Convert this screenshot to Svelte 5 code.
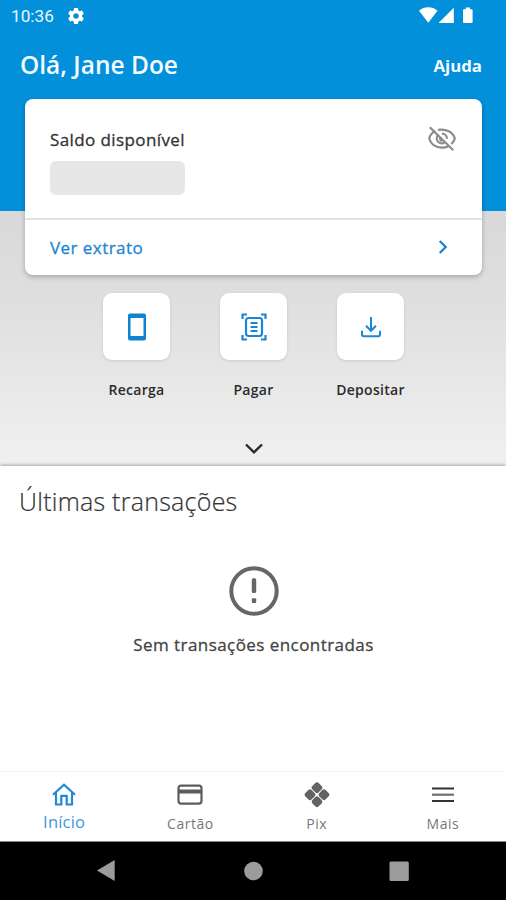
<script lang="ts">
	const userName = "Jane Doe";
	const time = "10:36";

	let active = "inicio";

	const actions = [
		{ id: "recarga", label: "Recarga" },
		{ id: "pagar", label: "Pagar" },
		{ id: "depositar", label: "Depositar" },
	];

	const tabs = [
		{ id: "inicio", label: "Início" },
		{ id: "cartao", label: "Cartão" },
		{ id: "pix", label: "Pix" },
		{ id: "mais", label: "Mais" },
	];
</script>

<div class="screen">
	<section class="top">
		<div class="status">
			<span class="time">{time}</span>
			<svg class="gear" viewBox="2 2 20 20" width="16" height="16">
				<path fill="#fff" d="M19.43 12.98c.04-.32.07-.64.07-.98s-.03-.66-.07-.98l2.11-1.65c.19-.15.24-.42.12-.64l-2-3.46c-.12-.22-.39-.3-.61-.22l-2.49 1c-.52-.4-1.08-.73-1.69-.98l-.38-2.65C14.46 2.18 14.25 2 14 2h-4c-.25 0-.46.18-.49.42l-.38 2.65c-.61.25-1.17.59-1.69.98l-2.49-1c-.23-.09-.49 0-.61.22l-2 3.46c-.13.22-.07.49.12.64l2.11 1.65c-.04.32-.07.65-.07.98s.03.66.07.98l-2.11 1.65c-.19.15-.24.42-.12.64l2 3.46c.12.22.39.3.61.22l2.49-1c.52.4 1.08.73 1.69.98l.38 2.65c.03.24.24.42.49.42h4c.25 0 .46-.18.49-.42l.38-2.65c.61-.25 1.17-.59 1.69-.98l2.49 1c.23.09.49 0 .61-.22l2-3.46c.12-.22.07-.49-.12-.64l-2.11-1.65zM12 15.5c-1.93 0-3.5-1.57-3.5-3.5s1.57-3.5 3.5-3.5 3.5 1.57 3.5 3.5-1.57 3.5-3.5 3.5z" />
			</svg>
			<svg class="signals" viewBox="0 0 55 17" width="55" height="17">
				<path fill="#fff" d="M0 3.7C5 -.8 13.5 -.8 18.5 3.7L9.3 15.8zM34.800 .8V16H19.500zM44 3.200q0-1 1-1h1.700V.5h4.200v1.700h1.700q1 0 1 1v11.800q0 1-1 1h-7.600q-1 0-1-1z" />
			</svg>
		</div>

		<header class="header">
			<h1>Olá, {userName}</h1>
			<button class="help">Ajuda</button>
		</header>

		<div class="card">
			<div class="balance">
				<div>
					<p class="balance-label">Saldo disponível</p>
					<div class="balance-hidden"></div>
				</div>
				<svg class="eye" viewBox="0 0 30 26" width="30" height="26" fill="none" stroke="#8c8c8c" stroke-width="2.200">
					<path d="M8.200 5C5 6.600 3 9 2.200 12.500C4 18.300 9 21.600 15 21.600C17.500 21.600 19.700 21.100 21.500 20.200M11 3.900C19.500 2.300 26 6.200 27.800 12.500C27.300 14.700 26 16.500 24.300 18" />
					<path d="M10.800 9.500C9.300 11.500 9.500 14.300 11.300 16C13 17.500 15.500 17.800 17.500 16.600M15 7.700C18 7.700 20 10 20 12.800M13.500 11.500C12.500 13 13.500 14.700 15.200 14.600" />
					<path d="M2.800 1.200L26.300 24.200" />
				</svg>
			</div>
			<button class="statement">
				<span>Ver extrato</span>
				<svg viewBox="0 0 10 14" width="10" height="14" fill="none" stroke="#1482d2" stroke-width="2.200">
					<path d="M1.700 1L7.700 7L1.700 13" />
				</svg>
			</button>
		</div>

		<div class="actions">
			{#each actions as action}
				<button class="action">
					<span class="tile">
						{#if action.id === "recarga"}
							<svg viewBox="0 0 18 28" width="18" height="28">
								<path fill="#0f82d2" fill-rule="evenodd" d="M2 .5h14q2 0 2 2v23q0 2-2 2H2q-2 0-2-2v-23q0-2 2-2zM2.500 5v18h13V5z" />
							</svg>
						{:else if action.id === "pagar"}
							<svg viewBox="0 0 26 28" width="26" height="28" fill="none" stroke="#1c86d6" stroke-width="2.200">
								<path d="M1.500 6V1.500H6M20 1.500h4.500V6M24.500 22v4.500H20M6 26.500H1.500V22" />
								<rect x="5" y="5" width="16" height="18" rx="2.500" />
								<path d="M9.500 10h7M9.500 14h7M9.500 18h7" />
							</svg>
						{:else}
							<svg viewBox="0 0 22 22" width="22" height="22" fill="none" stroke="#1c86d6" stroke-width="2">
								<path d="M11 1v13.500M6 9.800l5 5 5-5" />
								<path d="M2 14.800v3.700q0 1.700 1.700 1.700h14.600q1.700 0 1.700-1.700v-3.700" />
							</svg>
						{/if}
					</span>
					<span class="action-label">{action.label}</span>
				</button>
			{/each}
		</div>

		<svg class="expand" viewBox="0 0 18 12" width="18" height="12" fill="none" stroke="#2b2b2b" stroke-width="2.400">
			<path d="M1 1.500L9 9.300L17 1.500" />
		</svg>
	</section>

	<section class="transactions">
		<h2>Últimas transações</h2>
		<div class="empty">
			<svg viewBox="0 0 50 50" width="50" height="50">
				<circle cx="25" cy="25" r="22.700" fill="none" stroke="#666" stroke-width="4" />
				<rect x="22.800" y="12.300" width="4.400" height="14.700" rx="1.500" fill="#666" />
				<rect x="22.800" y="32.300" width="4.400" height="4.600" rx="1" fill="#666" />
			</svg>
			<p>Sem transações encontradas</p>
		</div>
	</section>

	<nav class="tabs">
		{#each tabs as tab}
			<button class="tab" class:active={active === tab.id} on:click={() => (active = tab.id)}>
				<svg viewBox="0 0 26 26" width="26" height="26" fill="none" stroke-width="2.200">
					{#if tab.id === "inicio"}
						<path stroke="#1e8ad6" stroke-width="2.200" d="M2 12.800L13 2.800L24 12.800M5 10.800V22.500H10.300V13.800H15.700V22.500H21V10.800" />
					{:else if tab.id === "cartao"}
						<rect x="1.500" y="3.600" width="23" height="18" rx="2.500" stroke="#5c5c5c" />
						<path stroke="#5c5c5c" stroke-width="4" d="M1.500 9.500h23" />
					{:else if tab.id === "pix"}
						<g fill="#636363" transform="translate(13 12.700) rotate(45)">
							<rect x="-9.400" y="-9.400" width="8.900" height="8.900" rx="2.400" />
							<rect x=".5" y="-9.400" width="8.900" height="8.900" rx="2.400" />
							<rect x="-9.400" y=".5" width="8.900" height="8.900" rx="2.400" />
							<rect x=".5" y=".5" width="8.900" height="8.900" rx="2.400" />
						</g>
					{:else}
						<path stroke="#333" d="M2 6.500h22M2 19h22" />
						<path stroke="#707070" d="M2 12.700h22" />
					{/if}
				</svg>
				<span>{tab.label}</span>
			</button>
		{/each}
	</nav>

	<div class="system">
		<svg viewBox="0 0 506 58" width="506" height="58" fill="#9b9b9b">
			<path d="M97 28.500L114.700 18V39z" />
			<circle cx="253.500" cy="29" r="9.300" />
			<rect x="389.500" y="19.500" width="19.300" height="19.500" rx="1.500" />
		</svg>
	</div>
</div>

<style>
	:global(body) {
		margin: 0;
		background: #fff;
	}
	.screen {
		display: flex;
		flex-direction: column;
		width: 506px;
		height: 900px;
		overflow: hidden;
		background: #fff;
		font-family: "Open Sans", "Noto Sans", sans-serif;
	}
	button {
		padding: 0;
		border: none;
		background: none;
		font-family: inherit;
		cursor: pointer;
	}
	h1,
	h2,
	p {
		margin: 0;
	}
	svg {
		display: block;
		flex: none;
	}
	.top {
		display: flex;
		flex-direction: column;
		flex: none;
		height: 466px;
		background: linear-gradient(#0390da 211px, #d9d9d9 211px, #dedede 290px, #f0f0f0 466px);
	}
	.status {
		display: flex;
		align-items: center;
		height: 32px;
		padding: 0 32px 0 11px;
	}
	.time {
		color: #e9f5fc;
		font-family: Roboto, sans-serif;
		font-size: 17.2px;
	}
	.gear {
		margin-left: 14px;
	}
	.signals {
		margin: -2px 0 0 auto;
	}
	.header {
		display: flex;
		align-items: center;
		justify-content: space-between;
		height: 67px;
		padding: 0 24px 2px 20px;
		box-sizing: border-box;
	}
	.header h1 {
		color: #f4faff;
		font-size: 24.5px;
		font-weight: 600;
	}
	.help {
		padding-top: 1px;
		color: #f4faff;
		font-size: 16.8px;
		font-weight: 700;
	}
	.card {
		width: 457px;
		height: 176px;
		margin-left: 25px;
		border-radius: 8px;
		background: #fff;
		box-shadow: 0 2px 5px rgba(0, 0, 0, 0.25);
	}
	.balance {
		display: flex;
		justify-content: space-between;
		height: 121px;
		padding: 28px 25px 0;
		box-sizing: border-box;
		border-bottom: 2px solid #e2e2e2;
	}
	.balance-label {
		color: #333;
		font-size: 17px;
		line-height: 26px;
		letter-spacing: 0.4px;
		-webkit-text-stroke: 0.3px #333;
	}
	.balance-hidden {
		width: 135px;
		height: 34px;
		margin-top: 8px;
		border-radius: 6px;
		background: #e7e7e7;
	}
	.eye {
		margin-top: -1px;
	}
	.statement {
		display: flex;
		align-items: center;
		justify-content: space-between;
		width: 100%;
		height: 54px;
		padding: 0 34px 0 25px;
		color: #1c86d6;
		font-size: 17px;
		letter-spacing: 0.45px;
		-webkit-text-stroke: 0.3px #1c86d6;
	}
	.actions {
		display: flex;
		justify-content: center;
		gap: 17px;
		margin-top: 18px;
		padding-left: 1px;
	}
	.action {
		display: flex;
		flex-direction: column;
		align-items: center;
		width: 100px;
	}
	.tile {
		display: flex;
		align-items: center;
		justify-content: center;
		width: 67px;
		height: 67px;
		border-radius: 9px;
		background: #fff;
		box-shadow: 0 1px 3px rgba(0, 0, 0, 0.12);
	}
	.action-label {
		margin-top: 20px;
		color: #2b2b2b;
		font-size: 14px;
		font-weight: 600;
		line-height: 20px;
		letter-spacing: 0.3px;
	}
	.expand {
		margin: 43px 0 0 244.5px;
	}
	.transactions {
		flex: 1;
		padding-top: 15px;
		box-shadow: 0 0 4px rgba(0, 0, 0, 0.5);
		clip-path: inset(-6px 0 0);
	}
	.transactions h2 {
		margin-left: 19px;
		color: #333;
		font-size: 25px;
		font-weight: 300;
		line-height: 40px;
		letter-spacing: 0.25px;
		-webkit-text-stroke: 0.2px #333;
	}
	.empty {
		display: flex;
		flex-direction: column;
		align-items: center;
		margin-top: 45px;
		padding-left: 1px;
	}
	.empty p {
		margin-top: 16px;
		color: #444;
		font-size: 17px;
		line-height: 26px;
		letter-spacing: 0.44px;
		-webkit-text-stroke: 0.3px #444;
	}
	.tabs {
		display: grid;
		grid-template-columns: repeat(4, 1fr);
		height: 71px;
		padding-left: 1px;
		border-top: 1px solid #f4f4f4;
		border-bottom: 1px solid #888;
		box-sizing: border-box;
	}
	.tab {
		display: flex;
		flex-direction: column;
		align-items: center;
		padding-top: 10px;
		color: #777;
		font-size: 14px;
		letter-spacing: 0.5px;
	}
	.tab span {
		margin-top: 6px;
		line-height: 20px;
	}
	.tab.active {
		color: #3f97dc;
		font-size: 16.5px;
		letter-spacing: 0.2px;
	}
	.tab.active span {
		margin-top: 4px;
	}
	.system {
		flex: none;
		height: 58px;
		background: #000;
	}
</style>
